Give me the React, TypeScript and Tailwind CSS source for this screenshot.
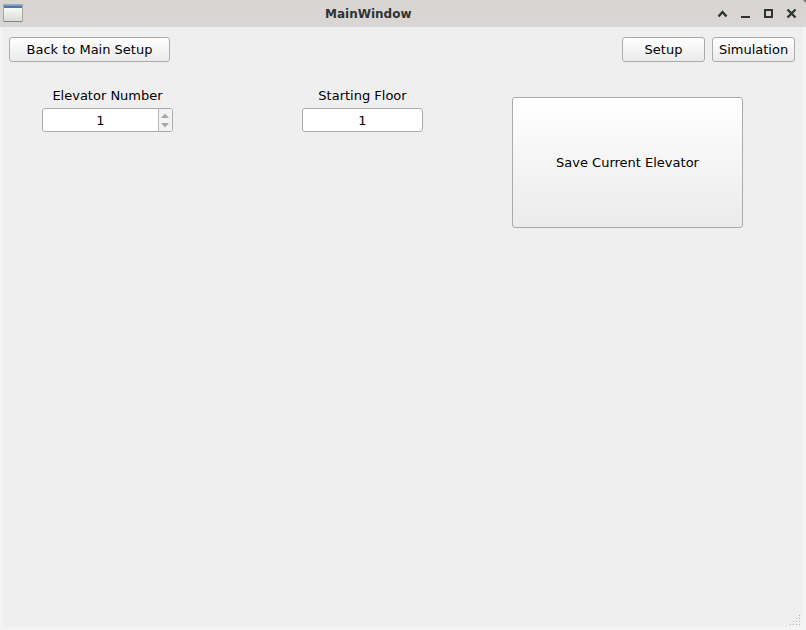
import type { ReactNode } from "react";

function Button({ className, children }: { className: string; children: ReactNode }) {
  return (
    <button
      className={`flex shrink-0 items-center justify-center whitespace-nowrap rounded-[3px] border border-[#ababab] bg-linear-to-b from-white to-[#ebebeb] ${className}`}
    >
      {children}
    </button>
  );
}

function TitleBar() {
  return (
    <header className="flex h-[27px] shrink-0 items-center bg-linear-to-b from-[#d8d4d1] to-[#dad6d3] text-[#2e3436]">
      <svg width="26" height="27" viewBox="0 0 26 27" shapeRendering="crispEdges">
        <defs>
          <linearGradient id="pane" x1="0" y1="0" x2="0" y2="1">
            <stop offset="0" stopColor="#ffffff" />
            <stop offset="1" stopColor="#d9dcd5" />
          </linearGradient>
        </defs>
        <rect x="3" y="4" width="20" height="18" rx="1" fill="#a9aaa7" />
        <rect x="4" y="5" width="18" height="16" fill="url(#pane)" />
        <rect x="4" y="5" width="18" height="1" fill="#7d9ccb" />
        <rect x="4" y="6" width="18" height="2" fill="#4878b8" />
        <rect x="4" y="21" width="18" height="1" fill="#858683" />
      </svg>
      <h1 className="mr-auto ml-[299px] pt-px text-[12px] font-bold leading-[27px]">MainWindow</h1>
      <svg width="90" height="27" viewBox="716 0 90 27" fill="none" stroke="#2e3436" strokeWidth="2">
        <path d="M718.5 16.5 722.5 12l4 4.5" strokeWidth="2.4" />
        <path d="M741 17h9" />
        <path d="M765 10h7v7h-7z" />
        <path d="m787.5 9.5 8 8m0-8-8 8" strokeWidth="2.4" />
        <path d="M803 0h3v3z" fill="#77736f" stroke="none" />
      </svg>
    </header>
  );
}

function SpinBox() {
  return (
    <div className="flex h-6 w-[131px] overflow-hidden rounded-[3px] border border-[#ababab] bg-white">
      <span className="flex-1 text-center leading-[23px]">1</span>
      <div className="border-l border-[#b6b6b6] bg-[#f3f3f3]">
        <svg width="13" height="22" viewBox="0 0 13 22">
          <path d="M2 9 6 4.5 10 9zM2 14h8l-4 4.5z" fill="#a8a8a8" />
        </svg>
      </div>
    </div>
  );
}

function SizeGrip() {
  const dots = [[9, 0], [6, 3], [9, 3], [3, 6], [6, 6], [9, 6], [0, 9], [3, 9], [6, 9], [9, 9]];
  return (
    <svg width="12" height="12" shapeRendering="crispEdges" className="mt-auto ml-auto">
      {dots.map(([x, y]) => (
        <g key={`${x}-${y}`}>
          <rect x={x + 1} y={y + 1} width="1" height="1" fill="#ffffff" />
          <rect x={x} y={y} width="1" height="1" fill="#b4b4b4" />
        </g>
      ))}
    </svg>
  );
}

export default function App() {
  return (
    <div className="flex h-[630px] w-[806px] flex-col overflow-hidden bg-[#f5f4f4] font-['DejaVu_Sans',sans-serif] text-[13px] text-black">
      <TitleBar />
      <main className="mr-1 mb-[3px] ml-[2px] flex min-h-0 flex-1 flex-col bg-[#efefef]">
        <nav className="flex pt-[10px] pr-[7px] pl-[7px]">
          <Button className="mr-auto h-[25px] w-[161px]">Back to Main Setup</Button>
          <Button className="mr-[7px] h-[25px] w-[83px]">Setup</Button>
          <Button className="h-[25px] w-[83px]">Simulation</Button>
        </nav>
        <section className="flex items-start pt-[25px] pl-10">
          <div className="w-[131px]">
            <div className="h-[21px] text-center leading-[17px]">Elevator Number</div>
            <SpinBox />
          </div>
          <div className="ml-[129px] w-[121px]">
            <div className="h-[21px] text-center leading-[17px]">Starting Floor</div>
            <div className="h-6 rounded-[3px] border border-[#ababab] bg-white text-center leading-[23px]">1</div>
          </div>
          <Button className="mt-[10px] ml-[89px] h-[131px] w-[231px]">Save Current Elevator</Button>
        </section>
        <SizeGrip />
      </main>
    </div>
  );
}
